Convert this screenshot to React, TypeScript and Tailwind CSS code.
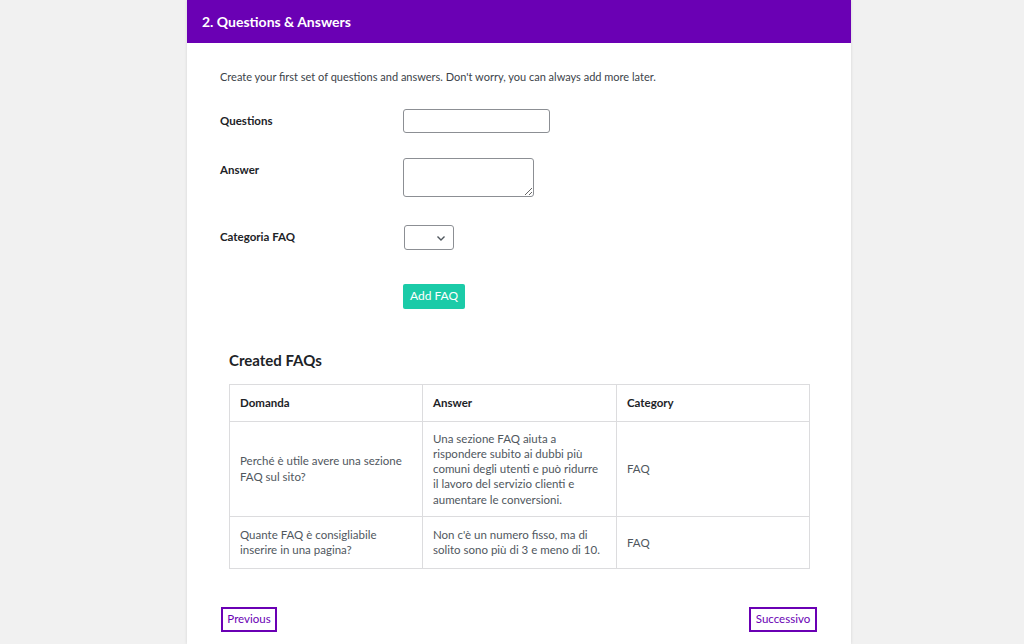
import React from "react";

const rows = [
  {
    q: "Perché è utile avere una sezione FAQ sul sito?",
    a: "Una sezione FAQ aiuta a rispondere subito ai dubbi più comuni degli utenti e può ridurre il lavoro del servizio clienti e aumentare le conversioni.",
    c: "FAQ",
  },
  {
    q: "Quante FAQ è consigliabile inserire in una pagina?",
    a: "Non c'è un numero fisso, ma di solito sono più di 3 e meno di 10.",
    c: "FAQ",
  },
];

export default function App() {
  return (
    <div
      className="min-h-[644px] w-full bg-[#f1f1f1] flex justify-center text-[#3c434a]"
      style={{ fontFamily: 'Lato, "Noto Sans", sans-serif' }}
    >
      <div className="w-[664px] ml-[14px] bg-white shadow-[0_0_3px_rgba(0,0,0,0.12)] flex flex-col">
        <div className="h-[43px] bg-[#6a00b4] flex items-center px-[15px]">
          <h2 className="text-white text-[14px] font-bold">2. Questions &amp; Answers</h2>
        </div>
        <div className="px-[33px] pt-[26px] pb-[12px]">
          <p className="text-[11px] leading-[16px] text-[#3c434a]">
            Create your first set of questions and answers. Don't worry, you can always add more later.
          </p>
          <div className="mt-[24px] grid grid-cols-[183px_1fr] gap-y-0">
            <div className="text-[11.5px] font-bold text-[#1d2327] pt-[3px] h-[49px]">Questions</div>
            <div>
              <input className="w-[147px] h-[24px] border border-[#8c8f94] rounded-[3px] bg-white" />
            </div>
            <div className="text-[11.5px] font-bold text-[#1d2327] pt-[3px] h-[67px]">Answer</div>
            <div>
              <textarea className="w-[131px] h-[39px] border border-[#8c8f94] rounded-[3px] bg-white block" />
            </div>
            <div className="text-[11.5px] font-bold text-[#1d2327] pt-[3px] h-[57px]">Categoria FAQ</div>
            <div>
              <div className="ml-[1px] w-[50px] h-[25px] border border-[#8c8f94] rounded-[3px] bg-white flex items-center justify-end pr-[7px]">
                <svg width="10" height="10" viewBox="0 0 10 10" fill="none">
                  <path d="M1.5 3.5L5 7L8.5 3.5" stroke="#50575e" strokeWidth="1.4" />
                </svg>
              </div>
            </div>
            <div />
            <div>
              <button className="h-[25px] w-[62px] bg-[#1bcba8] text-white text-[12px] rounded-[2px]">Add FAQ</button>
            </div>
          </div>
          <div className="px-[9px] mt-[40px]">
            <h3 className="text-[15px] font-bold text-[#1d2327] leading-[22px]">Created FAQs</h3>
            <table className="mt-[13px] w-[581px] border-collapse text-[11.5px] leading-[15.3px] text-[#50575e]">
              <thead>
                <tr>
                  <th className="w-[193px] h-[37px] border border-[#dcdcde] text-left font-bold text-[#1d2327] px-[10px]">Domanda</th>
                  <th className="w-[194px] border border-[#dcdcde] text-left font-bold text-[#1d2327] px-[10px]">Answer</th>
                  <th className="border border-[#dcdcde] text-left font-bold text-[#1d2327] px-[10px]">Category</th>
                </tr>
              </thead>
              <tbody>
                <tr>
                  <td className="border border-[#dcdcde] px-[10px] py-[9px] align-middle">{rows[0].q}</td>
                  <td className="border border-[#dcdcde] px-[10px] py-[9px] align-middle">{rows[0].a}</td>
                  <td className="border border-[#dcdcde] px-[10px] py-[9px] align-middle">{rows[0].c}</td>
                </tr>
                <tr>
                  <td className="border border-[#dcdcde] px-[10px] py-[10px] align-middle">{rows[1].q}</td>
                  <td className="border border-[#dcdcde] px-[10px] py-[10px] align-middle">{rows[1].a}</td>
                  <td className="border border-[#dcdcde] px-[10px] py-[10px] align-middle">{rows[1].c}</td>
                </tr>
              </tbody>
            </table>
          </div>
          <div className="mt-[38px] flex justify-between px-[1px]">
            <button className="h-[25px] w-[56px] border-2 border-[#6a00b4] text-[#6a00b4] text-[11.5px] bg-white">Previous</button>
            <button className="h-[25px] w-[68px] border-2 border-[#6a00b4] text-[#6a00b4] text-[11.5px] bg-white">Successivo</button>
          </div>
        </div>
      </div>
    </div>
  );
}
